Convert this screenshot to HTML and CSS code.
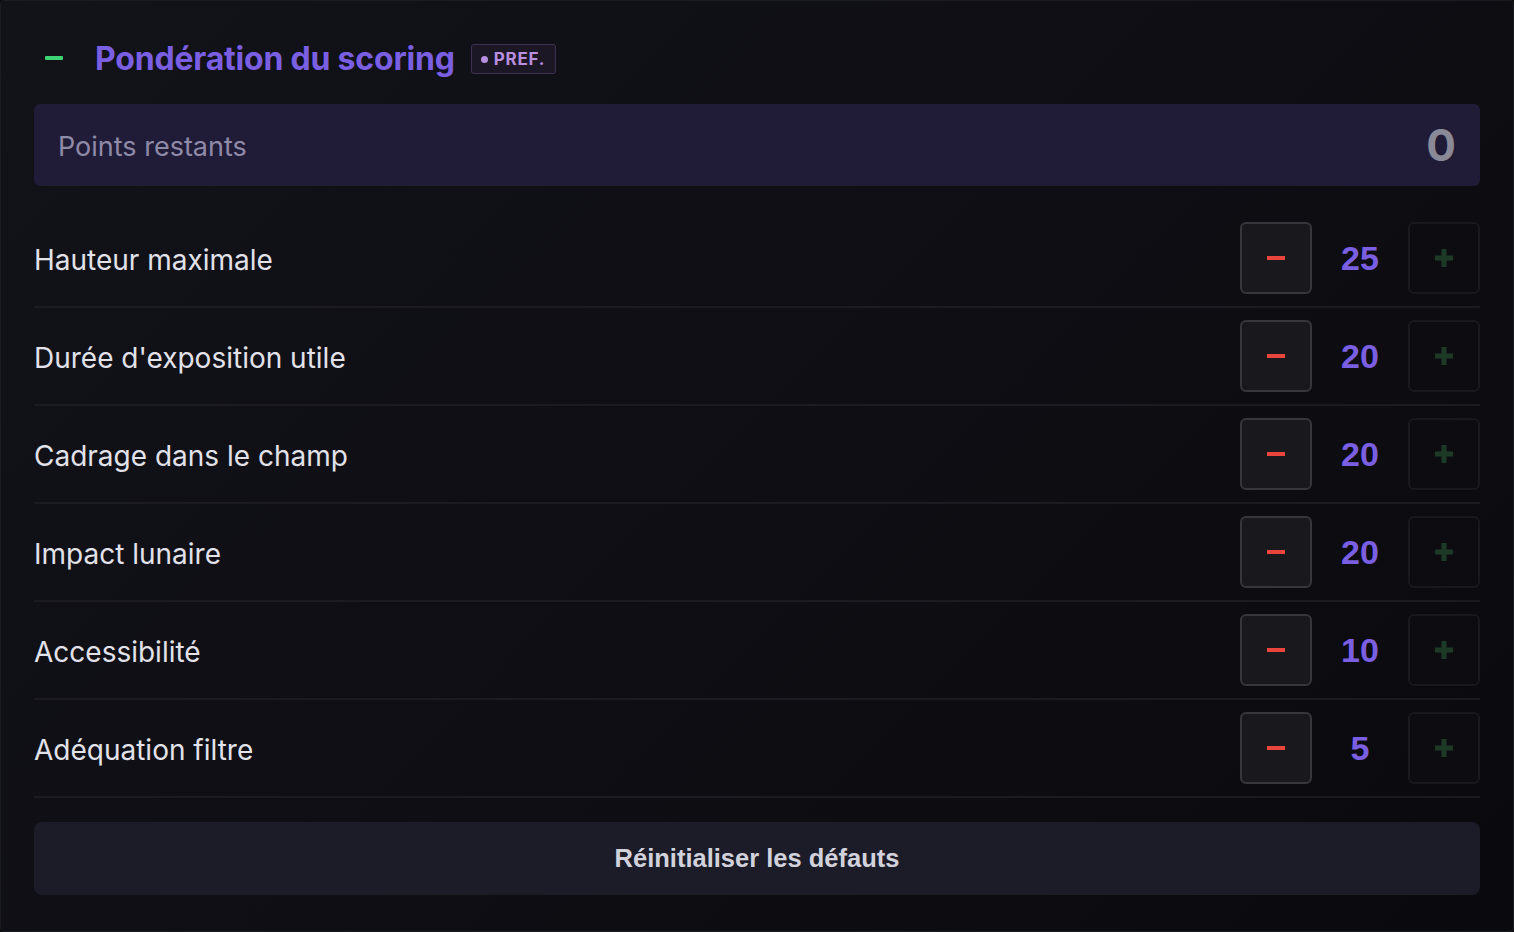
FILE: index.html
```html
<!DOCTYPE html>
<html lang="fr">
<head>
    <meta charset="UTF-8">
    <meta name="viewport" content="width=device-width, initial-scale=1.0">
    <title>Pondération du scoring</title>
    <link rel="stylesheet" href="styles.css">
</head>
<body>
    <div class="panel">
        <div class="panel-head">
            <span class="collapse-dash"></span>
            <h2 class="panel-title">Pondération du scoring</h2>
            <span class="badge"><span class="badge-dot"></span>PREF.</span>
        </div>

        <div class="remaining">
            <span class="remaining-label">Points restants</span>
            <span class="remaining-value" id="remaining">0</span>
        </div>

        <div class="weights" id="weights"></div>

        <button class="reset-btn" id="resetBtn">Réinitialiser les défauts</button>
    </div>

    <script>
        const TOTAL = 100;
        const defaults = [
            { label: 'Hauteur maximale', value: 25 },
            { label: "Durée d'exposition utile", value: 20 },
            { label: 'Cadrage dans le champ', value: 20 },
            { label: 'Impact lunaire', value: 20 },
            { label: 'Accessibilité', value: 10 },
            { label: 'Adéquation filtre', value: 5 }
        ];
        let weights = defaults.map(w => ({ ...w }));

        const list = document.getElementById('weights');
        const remainingEl = document.getElementById('remaining');

        function render() {
            const used = weights.reduce((sum, w) => sum + w.value, 0);
            const left = TOTAL - used;
            remainingEl.textContent = left;
            list.innerHTML = '';

            weights.forEach((w, i) => {
                const row = document.createElement('div');
                row.className = 'weight-row';
                row.innerHTML = `
                    <span class="weight-label">${w.label}</span>
                    <div class="stepper">
                        <button class="step-btn minus" ${w.value <= 0 ? 'disabled' : ''}><span class="bar-h"></span></button>
                        <span class="step-value">${w.value}</span>
                        <button class="step-btn plus" ${left <= 0 ? 'disabled' : ''}><span class="bar-h"></span><span class="bar-v"></span></button>
                    </div>`;
                row.querySelector('.minus').addEventListener('click', () => {
                    weights[i].value = Math.max(0, weights[i].value - 5);
                    render();
                });
                row.querySelector('.plus').addEventListener('click', () => {
                    weights[i].value += Math.min(5, left);
                    render();
                });
                list.appendChild(row);
            });
        }

        document.getElementById('resetBtn').addEventListener('click', () => {
            weights = defaults.map(w => ({ ...w }));
            render();
        });

        render();
    </script>
</body>
</html>
```

FILE: styles.css
```css
* {
    margin: 0;
    padding: 0;
    box-sizing: border-box;
}

body {
    font-family: 'Inter', 'Liberation Sans', sans-serif;
    background: #0a0a0d;
    color: #e2e2ea;
}

.panel {
    width: 1514px;
    height: 932px;
    border: 1px solid #1b1b22;
    border-radius: 4px;
    background: linear-gradient(135deg, #121219 0%, #0e0e14 50%, #0a0a0e 100%);
    padding: 35px 33px 36px 33px;
}

.panel-head {
    display: flex;
    align-items: center;
    height: 44px;
    margin-bottom: 24px;
}

.collapse-dash {
    width: 18px;
    height: 4px;
    background: #3ed374;
    border-radius: 1px;
    margin-left: 11px;
    margin-right: 32px;
}

.panel-title {
    font-size: 32px;
    font-weight: 700;
    color: #7b5fe3;
    letter-spacing: -0.2px;
}

.badge {
    display: inline-flex;
    align-items: center;
    gap: 6px;
    margin-left: 16px;
    margin-top: 2px;
    height: 30px;
    padding: 0 10px 0 9px;
    border: 1.5px solid #3f3153;
    border-radius: 3px;
    background: #1b1724;
    color: #b88ee0;
    font-size: 17px;
    font-weight: 700;
    letter-spacing: 0.8px;
}

.badge-dot {
    width: 7px;
    height: 7px;
    border-radius: 50%;
    background: #b88ee0;
}

.remaining {
    display: flex;
    justify-content: space-between;
    align-items: center;
    height: 82px;
    padding: 0 24px;
    background: #201c37;
    border-radius: 6px;
    margin-bottom: 24px;
}

.remaining-label {
    font-size: 27px;
    color: #8f8aa8;
    padding-top: 2px;
}

.remaining-value {
    font-size: 44px;
    font-weight: 700;
    color: #8a8998;
}

.weight-row {
    display: flex;
    justify-content: space-between;
    align-items: center;
    padding: 12px 0;
    border-bottom: 2px solid #1b1b21;
}

.weight-label {
    font-size: 28px;
    color: #e2e2ea;
    padding-top: 4px;
}

.stepper {
    display: flex;
    align-items: center;
}

.step-btn {
    position: relative;
    width: 72px;
    height: 72px;
    border-radius: 6px;
    cursor: pointer;
}

.step-btn.minus {
    background: #19191d;
    border: 2px solid #36363c;
}

.step-btn.plus {
    background: #0d0d11;
    border: 2px solid #18181d;
}

.step-btn:disabled {
    cursor: default;
}

.bar-h,
.bar-v {
    position: absolute;
    left: 50%;
    top: 50%;
    transform: translate(-50%, -50%);
}

.minus .bar-h {
    width: 18px;
    height: 4px;
    background: #ea443c;
}

.plus .bar-h {
    width: 18px;
    height: 5px;
    background: #1d3a27;
}

.plus .bar-v {
    width: 5px;
    height: 18px;
    background: #1d3a27;
}

.step-value {
    width: 96px;
    text-align: center;
    font-family: 'Liberation Sans', Arial, sans-serif;
    font-size: 34px;
    font-weight: 700;
    color: #7b5fe3;
}

.reset-btn {
    display: block;
    width: 100%;
    height: 73px;
    margin-top: 24px;
    border: none;
    border-radius: 8px;
    background: #1c1c29;
    color: #d2d2dc;
    font-family: 'Liberation Sans', Arial, sans-serif;
    font-size: 25.5px;
    font-weight: 700;
    cursor: pointer;
}
```
